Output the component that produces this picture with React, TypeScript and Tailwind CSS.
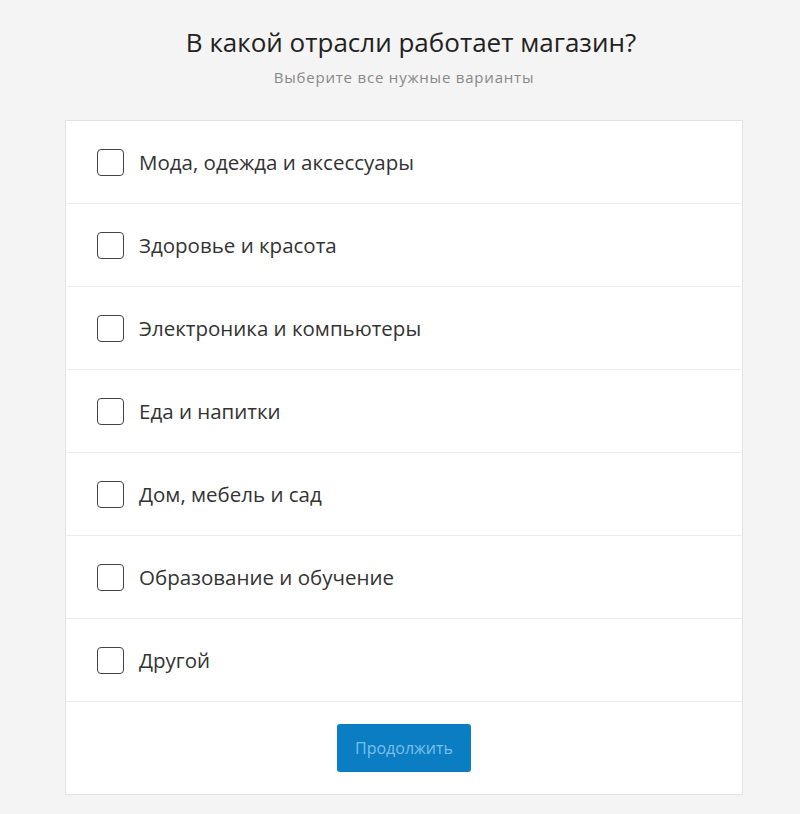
import React, { useState } from 'react';

const OPTIONS = [
  'Мода, одежда и аксессуары',
  'Здоровье и красота',
  'Электроника и компьютеры',
  'Еда и напитки',
  'Дом, мебель и сад',
  'Образование и обучение',
  'Другой',
];

export default function App() {
  const [checked, setChecked] = useState<string[]>([]);

  const toggle = (name: string) => {
    setChecked(prev => (prev.includes(name) ? prev.filter(n => n !== name) : [...prev, name]));
  };

  return (
    <div className="min-h-[814px] bg-[#f4f4f4] font-['Open_Sans',sans-serif]">
      <div className="ml-[65px] w-[678px] pt-[23px]">
        <h1 className="text-center text-[26px] leading-[38px] text-[#222] pl-[14px]">
          В какой отрасли работает магазин?
        </h1>
        <p className="mt-[6px] text-center text-[15px] leading-[20px] tracking-[0.8px] text-[#888]">
          Выберите все нужные варианты
        </p>

        <div className="mt-[33px] bg-white border border-[#e3e3e3]">
          {OPTIONS.map(name => (
            <label
              key={name}
              className="flex h-[83px] items-center gap-[15px] border-b border-[#ececec] pl-[31px] cursor-pointer"
            >
              <input
                type="checkbox"
                className="sr-only"
                checked={checked.includes(name)}
                onChange={() => toggle(name)}
              />
              <span className="h-[27px] w-[27px] rounded-[4px] border border-[#444] bg-white" />
              <span className="text-[20.5px] leading-[28px] text-[#333]">{name}</span>
            </label>
          ))}
          <div className="flex justify-center pt-[22px] pb-[22px]">
            <button
              type="button"
              disabled={checked.length === 0}
              className="h-[48px] w-[134px] rounded-[3px] bg-[#0b7dc2] text-[16px] text-[#7cc0ea]"
            >
              Продолжить
            </button>
          </div>
        </div>
      </div>
    </div>
  );
}
